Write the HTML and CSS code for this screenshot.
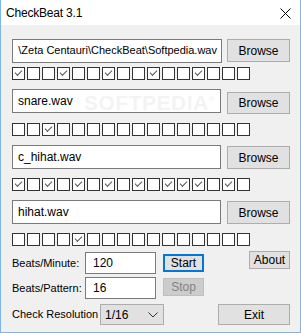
FILE: index.html
```html
<!DOCTYPE html>
<html lang="en">
<head>
    <meta charset="UTF-8">
    <title>CheckBeat 3.1</title>
    <link rel="stylesheet" href="styles.css">
</head>
<body>
    <div class="window">
        <div class="titlebar">
            <span class="title">CheckBeat 3.1</span>
            <svg class="close" width="11" height="11" viewBox="0 0 11 11"><path d="M0.5 0.5L10.5 10.5M10.5 0.5L0.5 10.5" stroke="#000" stroke-width="1"/></svg>
        </div>
        <div class="content">
            <div class="track">
                <div class="file-row">
                    <div class="path-box path-long"><span>\Zeta Centauri\CheckBeat\Softpedia.wav</span></div>
                    <button class="btn browse">Browse</button>
                </div>
                <div class="checks checks-first">
                    <i class="cb on"></i><i class="cb"></i><i class="cb"></i><i class="cb on"></i><i class="cb"></i><i class="cb"></i><i class="cb on"></i><i class="cb"></i><i class="cb"></i><i class="cb on"></i><i class="cb"></i><i class="cb"></i><i class="cb on"></i><i class="cb"></i><i class="cb"></i><i class="cb"></i>
                </div>
            </div>
            <div class="track">
                <div class="file-row">
                    <div class="path-box"><span>snare.wav</span></div>
                    <button class="btn browse browse-low">Browse</button>
                </div>
                <div class="checks">
                    <i class="cb"></i><i class="cb"></i><i class="cb on"></i><i class="cb"></i><i class="cb"></i><i class="cb"></i><i class="cb"></i><i class="cb"></i><i class="cb"></i><i class="cb"></i><i class="cb"></i><i class="cb"></i><i class="cb"></i><i class="cb"></i><i class="cb"></i><i class="cb"></i>
                </div>
                <div class="watermark">SOFTPEDIA<sup>®</sup></div>
            </div>
            <div class="track">
                <div class="file-row">
                    <div class="path-box"><span>c_hihat.wav</span></div>
                    <button class="btn browse browse-mid">Browse</button>
                </div>
                <div class="checks">
                    <i class="cb on"></i><i class="cb"></i><i class="cb on"></i><i class="cb"></i><i class="cb on"></i><i class="cb"></i><i class="cb on"></i><i class="cb"></i><i class="cb on"></i><i class="cb"></i><i class="cb on"></i><i class="cb on"></i><i class="cb on"></i><i class="cb"></i><i class="cb on"></i><i class="cb"></i>
                </div>
            </div>
            <div class="track">
                <div class="file-row">
                    <div class="path-box"><span>hihat.wav</span></div>
                    <button class="btn browse browse-mid">Browse</button>
                </div>
                <div class="checks">
                    <i class="cb"></i><i class="cb"></i><i class="cb"></i><i class="cb"></i><i class="cb on"></i><i class="cb"></i><i class="cb"></i><i class="cb"></i><i class="cb"></i><i class="cb"></i><i class="cb"></i><i class="cb"></i><i class="cb"></i><i class="cb"></i><i class="cb"></i><i class="cb"></i>
                </div>
            </div>

            <div class="ctrl-row row-bpm">
                <label class="lbl">Beats/Minute:</label>
                <div class="num-box">120</div>
                <button class="btn small start">Start</button>
                <button class="btn small about">About</button>
            </div>
            <div class="ctrl-row row-bpp">
                <label class="lbl">Beats/Pattern:</label>
                <div class="num-box">16</div>
                <button class="btn small stop" disabled>Stop</button>
            </div>
            <div class="ctrl-row row-res">
                <label class="lbl lbl-res">Check Resolution</label>
                <div class="combo">
                    <span>1/16</span>
                    <svg width="10" height="6" viewBox="0 0 10 6"><path d="M0.5 0.5L5 5L9.5 0.5" fill="none" stroke="#333" stroke-width="1"/></svg>
                </div>
                <button class="btn exit">Exit</button>
            </div>
        </div>
    </div>
</body>
</html>
```

FILE: styles.css
```css
* {
    box-sizing: border-box;
}
body {
    margin: 0;
    padding: 0;
    font-family: 'Liberation Sans', Arial, sans-serif;
    color: #000;
}
.window {
    width: 301px;
    height: 333px;
    background: #f0f0f0;
    border: 1px solid #7db6ea;
    border-top: 0;
    position: relative;
}
.titlebar {
    height: 25px;
    background: #fff;
    display: flex;
    align-items: center;
    justify-content: space-between;
    padding: 0 9px 0 5px;
}
.title {
    font-size: 12px;
    letter-spacing: -0.2px;
}
.close {
    margin-top: 1px;
}
.content {
    padding: 14px 9px 0 11px;
}
.track {
    margin-bottom: 9px;
    position: relative;
}
.file-row {
    display: flex;
    align-items: flex-start;
    gap: 5px;
}
.path-box {
    width: 209px;
    height: 24px;
    background: #fff;
    border: 1px solid #7a7a7a;
    overflow: hidden;
    white-space: nowrap;
    font-size: 12px;
    padding: 4px 5px 0 5px;
}
.path-long {
    width: 210px;
    font-size: 11px;
    padding: 4px 4px 0 5px;
    text-align: right;
}
.btn {
    font-family: 'Liberation Sans', Arial, sans-serif;
    background: #e1e1e1;
    border: 1px solid #adadad;
    color: #000;
    padding: 0;
    margin: 0;
    font-size: 12px;
}
.browse {
    width: 63px;
    height: 23px;
}
.track + .track .browse {
    margin-left: 1px;
}
.browse-low {
    margin-top: 3px;
    height: 22px;
}
.browse-mid {
    margin-top: 1px;
}
.checks {
    display: flex;
    gap: 2px;
    margin-top: 9px;
}
.checks-first {
    margin-top: 4px;
}
.cb {
    width: 13px;
    height: 13px;
    border: 1px solid #333;
    background: #fff;
    position: relative;
}
.cb.on::after {
    content: "";
    position: absolute;
    left: 2px;
    top: 2px;
    width: 6px;
    height: 3px;
    border-left: 1.5px solid #555;
    border-bottom: 1.5px solid #555;
    transform: rotate(-45deg);
}
.watermark {
    position: absolute;
    left: 72px;
    top: 2px;
    font-size: 21px;
    font-weight: bold;
    letter-spacing: 0.5px;
    color: rgba(215, 215, 215, 0.3);
    pointer-events: none;
}
.watermark sup {
    font-size: 8px;
}
.ctrl-row {
    display: flex;
    align-items: flex-start;
}
.row-bpm {
    margin-top: -3px;
}
.row-bpp {
    margin-top: 3px;
}
.row-res {
    margin-top: 5px;
}
.lbl {
    width: 73px;
    line-height: 22px;
    font-size: 11px;
    white-space: nowrap;
}
.lbl-res {
    width: 88px;
    line-height: 21px;
}
.num-box {
    width: 71px;
    height: 22px;
    background: #fff;
    border: 1px solid #7a7a7a;
    font-size: 12px;
    padding: 3px 0 0 7px;
}
.small {
    width: 41px;
    height: 18px;
    margin-left: 7px;
}
.start {
    margin-top: 2px;
    border: 2px solid #0078d7;
}
.about {
    margin-left: auto;
    margin-top: -1px;
    margin-right: 1px;
}
.stop {
    margin-top: 1px;
    background: #cccccc;
    border-color: #bfbfbf;
    color: #838383;
}
.combo {
    width: 64px;
    height: 21px;
    background: #e1e1e1;
    border: 1px solid #adadad;
    display: flex;
    align-items: center;
    justify-content: space-between;
    padding: 0 5px 0 4px;
    font-size: 12px;
}
.exit {
    width: 72px;
    height: 21px;
    margin-left: auto;
    margin-right: 1px;
}
```
